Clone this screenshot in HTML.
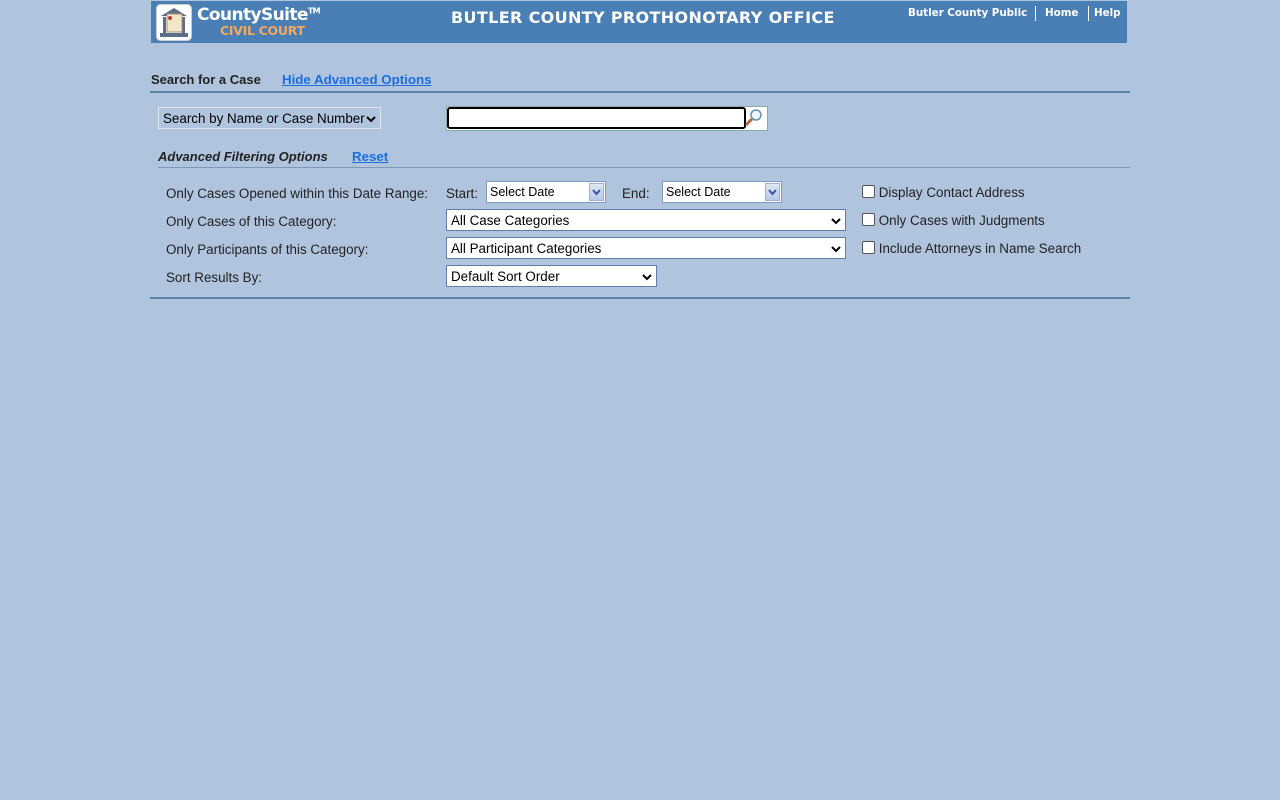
<!DOCTYPE html>
<html><head><meta charset="utf-8"><style>
body{margin:0;background:#b0c4de;font-family:"Liberation Sans",Arial,sans-serif;color:#222;font-size:13.4px;width:1280px;height:800px;position:relative;overflow:hidden}
.a{position:absolute;white-space:nowrap}
.hdr{left:151px;top:1px;width:976px;height:42px;background:#4a7fb5}
.lnk{color:#1a6fe0;font-weight:bold;text-decoration:underline;font-size:13.3px}
.line{height:2px;background:#5a82a8}
.sel{background:#fff;border:1px solid #5f7fa8;box-sizing:border-box;font-size:13.4px;color:#000;padding:3px 0 0 4px;height:22px}
.sel svg{position:absolute;right:4px;top:7px}
.cb{width:11px;height:11px;border:1px solid #555;border-radius:2px;background:#fff;display:inline-block;vertical-align:-1px}
.dt{background:#fff;border:1px solid #7f9dc6;box-sizing:border-box;height:22px;font-size:12.5px;padding:3px 0 0 3px;color:#000}
.dt i{position:absolute;right:1px;top:1px;width:15px;height:18px;background:linear-gradient(#dfe7f7,#b9c8ea);border:1px solid #9fb0d8;box-sizing:border-box}
.dt i svg{position:absolute;left:2px;top:5px}
</style></head><body>
<div class="a hdr"></div>
<svg class="a" style="left:156px;top:4px" width="36" height="37" viewBox="0 0 36 37"><rect x="0.5" y="0.5" width="35" height="36" rx="4" fill="#fff" stroke="#ccc"/><path d="M5 12 L18 4 L31 12 Z" fill="#5b6f86"/><rect x="7" y="13" width="3" height="16" fill="#5b6f86"/><rect x="26" y="13" width="3" height="16" fill="#5b6f86"/><path d="M11 10 h15 v18 h-15z" fill="#f4e7c8" stroke="#a88"/><circle cx="14" cy="14" r="2" fill="#c0392b"/><rect x="4" y="29" width="28" height="4" fill="#5b6f86"/></svg>
<div class="a" style="left:197px;top:5px;color:#fff;font-weight:bold;font-size:17px;font-family:'DejaVu Sans',sans-serif;letter-spacing:-0.6px">CountySuite<sup style="font-size:8px">TM</sup></div>
<div class="a" style="left:220px;top:23px;color:#f6a85a;font-weight:bold;font-size:12.5px;font-family:'DejaVu Sans',sans-serif;letter-spacing:-0.3px">CIVIL COURT</div>
<div class="a" style="left:451px;top:8px;color:#fff;font-weight:bold;font-size:16px;font-family:'DejaVu Sans',sans-serif;letter-spacing:0.35px">BUTLER COUNTY PROTHONOTARY OFFICE</div>
<div class="a" style="left:908px;top:7px;color:#fff;font-weight:bold;font-size:10.3px;font-family:'DejaVu Sans',sans-serif">Butler County Public</div>
<div class="a" style="left:1035px;top:6px;width:1px;height:15px;background:#fff"></div>
<div class="a" style="left:1045px;top:7px;color:#fff;font-weight:bold;font-size:10.3px;font-family:'DejaVu Sans',sans-serif">Home</div>
<div class="a" style="left:1088px;top:6px;width:1px;height:15px;background:#fff"></div>
<div class="a" style="left:1094px;top:7px;color:#fff;font-weight:bold;font-size:10.3px;font-family:'DejaVu Sans',sans-serif">Help</div>

<div class="a" style="left:151px;top:72px;font-weight:bold;font-size:13px">Search for a Case</div>
<div class="a lnk" style="left:282px;top:72px">Hide Advanced Options</div>
<div class="a line" style="left:150px;top:91px;width:980px"></div>

<div class="a sel" style="left:158px;top:107px;width:223px;border-color:#dfe6ee;background:#b0c4de">Search by Name or Case Number<svg width="10" height="8"><path d="M1 2 L5 6 L9 2" stroke="#000" stroke-width="2" fill="none"/></svg></div>
<div class="a" style="left:446px;top:106px;width:320px;height:23px;background:#fff;border:1px solid #8aa"></div>
<div class="a" style="left:447px;top:107px;width:295px;height:18px;border:2px solid #000;border-radius:3px;background:#fff"></div>
<svg class="a" style="left:744px;top:108px" width="20" height="20"><circle cx="12" cy="7" r="5" fill="#eef6ff" stroke="#6a8fb5" stroke-width="1.5"/><path d="M8 11 L2 17" stroke="#b06a3a" stroke-width="3"/></svg>

<div class="a" style="left:158px;top:149px;font-weight:bold;font-style:italic;font-size:13px">Advanced Filtering Options</div>
<div class="a lnk" style="left:352px;top:149px">Reset</div>
<div class="a" style="left:158px;top:167px;width:972px;height:1px;background:#7f98b5"></div>

<div class="a" style="left:166px;top:186px">Only Cases Opened within this Date Range:</div>
<div class="a" style="left:446px;top:186px">Start:</div>
<div class="a dt" style="left:486px;top:181px;width:120px">Select Date<i><svg width="9" height="7"><path d="M1 1 L4.5 5 L8 1" stroke="#3355aa" stroke-width="2" fill="none"/></svg></i></div>
<div class="a" style="left:622px;top:186px">End:</div>
<div class="a dt" style="left:662px;top:181px;width:120px">Select Date<i><svg width="9" height="7"><path d="M1 1 L4.5 5 L8 1" stroke="#3355aa" stroke-width="2" fill="none"/></svg></i></div>
<div class="a" style="left:862px;top:185px"><span class="cb"></span> Display Contact Address</div>

<div class="a" style="left:166px;top:214px">Only Cases of this Category:</div>
<div class="a sel" style="left:446px;top:209px;width:400px">All Case Categories<svg width="10" height="8"><path d="M1 2 L5 6 L9 2" stroke="#000" stroke-width="2" fill="none"/></svg></div>
<div class="a" style="left:862px;top:213px"><span class="cb"></span> Only Cases with Judgments</div>

<div class="a" style="left:166px;top:242px">Only Participants of this Category:</div>
<div class="a sel" style="left:446px;top:237px;width:400px">All Participant Categories<svg width="10" height="8"><path d="M1 2 L5 6 L9 2" stroke="#000" stroke-width="2" fill="none"/></svg></div>
<div class="a" style="left:862px;top:241px"><span class="cb"></span> Include Attorneys in Name Search</div>

<div class="a" style="left:166px;top:270px">Sort Results By:</div>
<div class="a sel" style="left:446px;top:265px;width:211px">Default Sort Order<svg width="10" height="8"><path d="M1 2 L5 6 L9 2" stroke="#000" stroke-width="2" fill="none"/></svg></div>

<div class="a line" style="left:150px;top:297px;width:980px"></div>
</body></html>
